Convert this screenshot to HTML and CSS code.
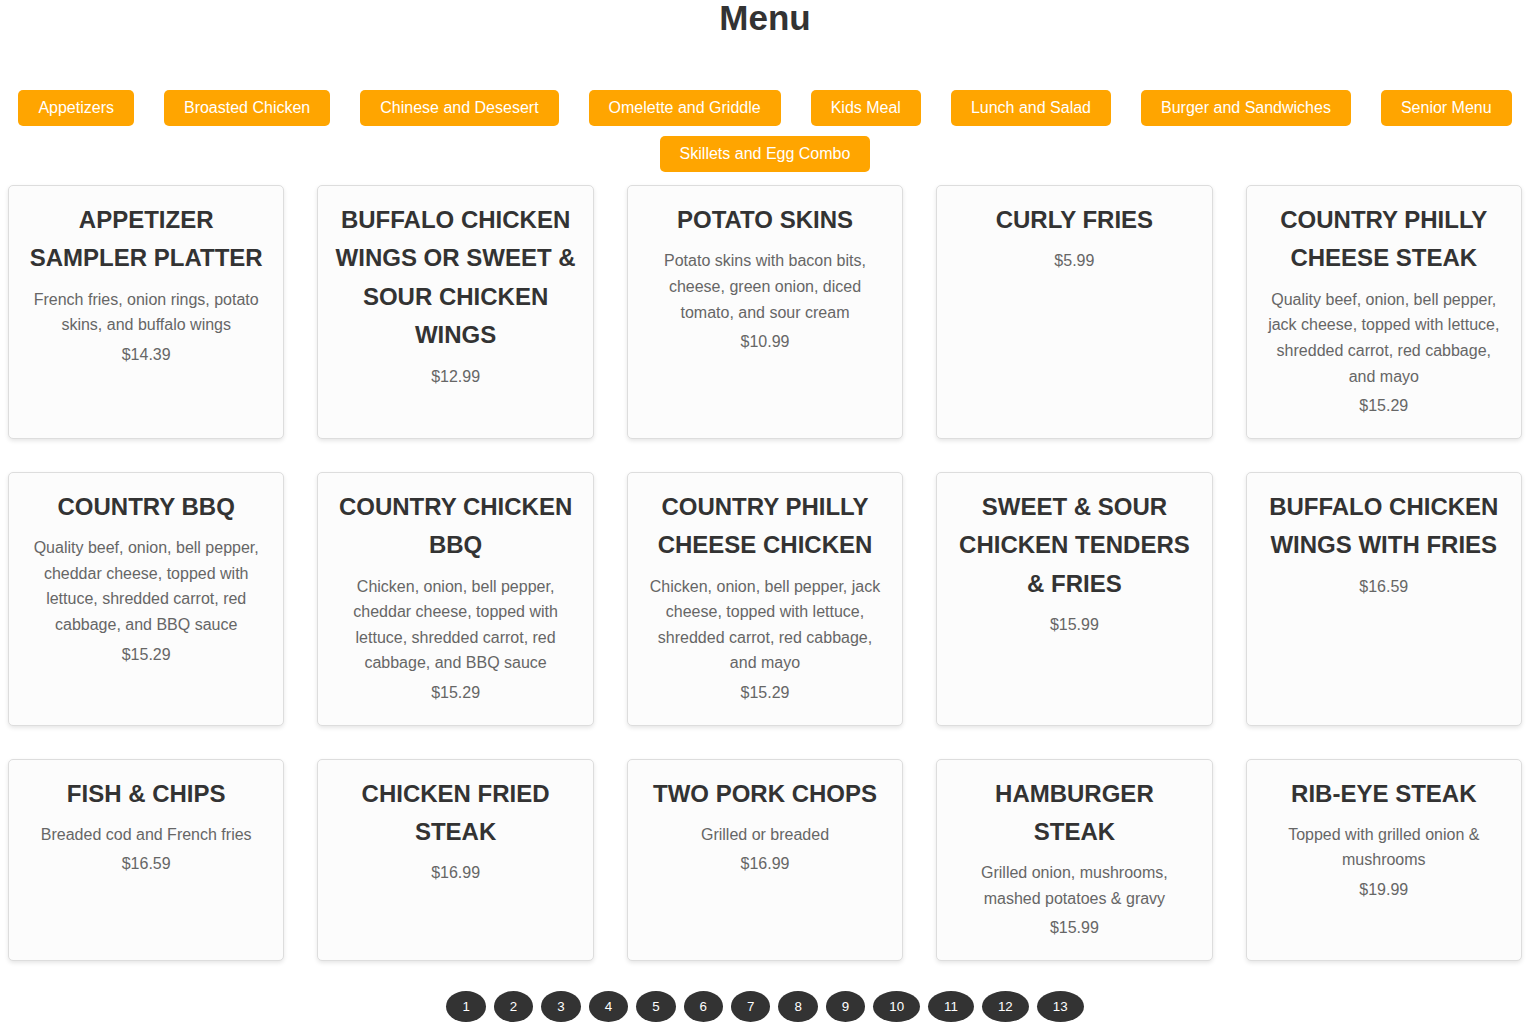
FILE: index.html
```html
<!DOCTYPE html>
<html lang="en">
<head>
  <meta charset="UTF-8">
  <meta name="viewport" content="width=device-width, initial-scale=1.0">
  <title>Menu</title>
  <link rel="stylesheet" href="styles.css">
</head>
<body>
  <h1 class="page-title">Menu</h1>

  <div id="categories" class="categories">
    <button class="category-btn">Appetizers</button>
    <button class="category-btn">Broasted Chicken</button>
    <button class="category-btn">Chinese and Desesert</button>
    <button class="category-btn">Omelette and Griddle</button>
    <button class="category-btn">Kids Meal</button>
    <button class="category-btn">Lunch and Salad</button>
    <button class="category-btn">Burger and Sandwiches</button>
    <button class="category-btn">Senior Menu</button>
    <button class="category-btn">Skillets and Egg Combo</button>
  </div>

  <div id="menuItems" class="menu-grid">
    <div class="menu-item">
      <h3>Appetizer Sampler Platter</h3>
      <p class="desc">French fries, onion rings, potato skins, and buffalo wings</p>
      <p class="price">$14.39</p>
    </div>
    <div class="menu-item">
      <h3>Buffalo Chicken Wings or Sweet &amp; Sour Chicken Wings</h3>
      <p class="price">$12.99</p>
    </div>
    <div class="menu-item">
      <h3>Potato Skins</h3>
      <p class="desc">Potato skins with bacon bits, cheese, green onion, diced tomato, and sour cream</p>
      <p class="price">$10.99</p>
    </div>
    <div class="menu-item">
      <h3>Curly Fries</h3>
      <p class="price">$5.99</p>
    </div>
    <div class="menu-item">
      <h3>Country Philly Cheese Steak</h3>
      <p class="desc">Quality beef, onion, bell pepper, jack cheese, topped with lettuce, shredded carrot, red cabbage, and mayo</p>
      <p class="price">$15.29</p>
    </div>

    <div class="menu-item">
      <h3>Country BBQ</h3>
      <p class="desc">Quality beef, onion, bell pepper, cheddar cheese, topped with lettuce, shredded carrot, red cabbage, and BBQ sauce</p>
      <p class="price">$15.29</p>
    </div>
    <div class="menu-item">
      <h3>Country Chicken BBQ</h3>
      <p class="desc">Chicken, onion, bell pepper, cheddar cheese, topped with lettuce, shredded carrot, red cabbage, and BBQ sauce</p>
      <p class="price">$15.29</p>
    </div>
    <div class="menu-item">
      <h3>Country Philly Cheese Chicken</h3>
      <p class="desc">Chicken, onion, bell pepper, jack cheese, topped with lettuce, shredded carrot, red cabbage, and mayo</p>
      <p class="price">$15.29</p>
    </div>
    <div class="menu-item">
      <h3>Sweet &amp; Sour Chicken Tenders &amp; Fries</h3>
      <p class="price">$15.99</p>
    </div>
    <div class="menu-item">
      <h3>Buffalo Chicken Wings with Fries</h3>
      <p class="price">$16.59</p>
    </div>

    <div class="menu-item">
      <h3>Fish &amp; Chips</h3>
      <p class="desc">Breaded cod and French fries</p>
      <p class="price">$16.59</p>
    </div>
    <div class="menu-item">
      <h3>Chicken Fried Steak</h3>
      <p class="price">$16.99</p>
    </div>
    <div class="menu-item">
      <h3>Two Pork Chops</h3>
      <p class="desc">Grilled or breaded</p>
      <p class="price">$16.99</p>
    </div>
    <div class="menu-item">
      <h3>Hamburger Steak</h3>
      <p class="desc">Grilled onion, mushrooms, mashed potatoes &amp; gravy</p>
      <p class="price">$15.99</p>
    </div>
    <div class="menu-item">
      <h3>Rib-Eye Steak</h3>
      <p class="desc">Topped with grilled onion &amp; mushrooms</p>
      <p class="price">$19.99</p>
    </div>
  </div>

  <div id="pagination" class="pagination">
    <button class="page-btn">1</button>
    <button class="page-btn">2</button>
    <button class="page-btn">3</button>
    <button class="page-btn">4</button>
    <button class="page-btn">5</button>
    <button class="page-btn">6</button>
    <button class="page-btn">7</button>
    <button class="page-btn">8</button>
    <button class="page-btn">9</button>
    <button class="page-btn">10</button>
    <button class="page-btn">11</button>
    <button class="page-btn">12</button>
    <button class="page-btn">13</button>
  </div>
</body>
</html>
```

FILE: styles.css
```css
body {
  font-family: "Liberation Sans", Arial, sans-serif;
  margin: 0;
  padding: 0;
  background-color: #fff;
  color: #333;
}

.page-title {
  font-size: 35px;
  text-align: center;
  color: #333;
  margin: -2px 0 0 0;
}

.categories {
  display: flex;
  flex-wrap: wrap;
  justify-content: center;
  column-gap: 30px;
  row-gap: 10px;
  margin-top: 52px;
}

.category-btn {
  font-family: inherit;
  font-size: 16px;
  padding: 9px 20px;
  border: none;
  border-radius: 5px;
  background-color: #ffa500;
  color: #fff;
  cursor: pointer;
}

.category-btn:hover {
  background-color: #ff8c00;
}

.menu-grid {
  display: grid;
  grid-template-columns: repeat(5, 1fr);
  gap: 33px;
  padding: 0 8px;
  margin-top: 13px;
}

.menu-item {
  background-color: #fcfcfc;
  border: 1px solid #ddd;
  border-radius: 5px;
  box-shadow: 0 2px 4px rgba(0, 0, 0, 0.1);
  padding: 15px;
  text-align: center;
}

.menu-item h3 {
  font-size: 24px;
  line-height: 1.6;
  text-transform: uppercase;
  color: #333;
  margin: 0 0 9px 0;
}

.menu-item p {
  font-size: 16px;
  line-height: 1.6;
  color: #666;
  margin: 0;
}

.menu-item .desc {
  margin-bottom: 4px;
}

.menu-item .price {
  margin-bottom: 4px;
}

.pagination {
  display: flex;
  justify-content: center;
  gap: 8px;
  margin-top: 30px;
}

.page-btn {
  font-family: inherit;
  font-size: 13.33px;
  padding: 8px 16px;
  border: none;
  border-radius: 50%;
  background-color: #333;
  color: #fff;
  cursor: pointer;
}
```
